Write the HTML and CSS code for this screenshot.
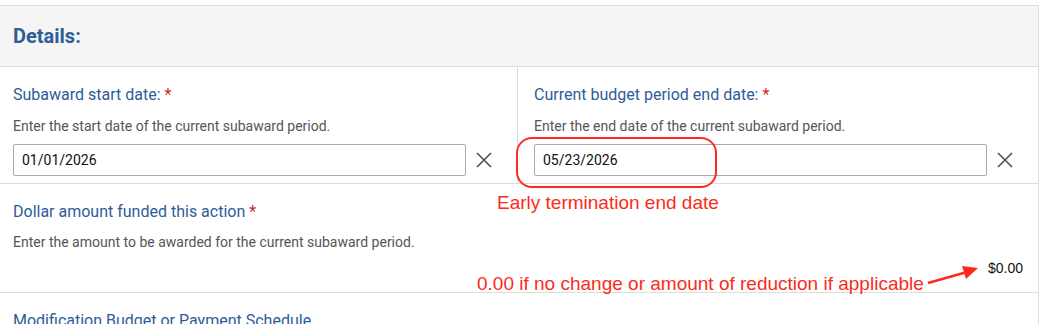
FILE: index.html
```html
<!DOCTYPE html>
<html lang="en">
<head>
    <meta charset="UTF-8">
    <meta name="viewport" content="width=device-width, initial-scale=1.0">
    <title>Details</title>
    <link rel="stylesheet" href="styles.css">
</head>
<body>
    <div class="panel">
        <div class="panel-head">
            <h2>Details:</h2>
        </div>

        <div class="row split">
            <div class="cell">
                <label class="field-label">Subaward start date: <span class="req">*</span></label>
                <p class="help">Enter the start date of the current subaward period.</p>
                <div class="date-field">
                    <input type="text" value="01/01/2026">
                    <button class="clear" aria-label="Clear">
                        <svg width="16" height="16" viewBox="0 0 16 16"><path d="M1 1L15 15M15 1L1 15" stroke="#555" stroke-width="1.7" fill="none"/></svg>
                    </button>
                </div>
            </div>
            <div class="cell">
                <label class="field-label">Current budget period end date: <span class="req">*</span></label>
                <p class="help">Enter the end date of the current subaward period.</p>
                <div class="date-field">
                    <input type="text" value="05/23/2026">
                    <button class="clear" aria-label="Clear">
                        <svg width="16" height="16" viewBox="0 0 16 16"><path d="M1 1L15 15M15 1L1 15" stroke="#555" stroke-width="1.7" fill="none"/></svg>
                    </button>
                </div>
            </div>
        </div>

        <div class="row amount">
            <label class="field-label">Dollar amount funded this action <span class="req">*</span></label>
            <p class="help">Enter the amount to be awarded for the current subaward period.</p>
            <div class="total">$0.00</div>
        </div>

        <div class="row last">
            <label class="field-label">Modification Budget or Payment Schedule</label>
        </div>
    </div>

    <!-- markup drawn over the form -->
    <div class="mark-box"></div>
    <div class="note note-end">Early termination end date</div>
    <div class="note note-amount">0.00 if no change or amount of reduction if applicable</div>
    <svg class="arrow" width="60" height="30" viewBox="0 0 60 30">
        <path d="M3 22L42 11" stroke="#fb2b20" stroke-width="2.5" fill="none"/>
        <path d="M53 7L37 5L41 18Z" fill="#fb2b20"/>
    </svg>
</body>
</html>
```

FILE: styles.css
```css
body {
    font-family: Roboto, "Liberation Sans", sans-serif;
    background-color: #fff;
    color: #222;
    margin: 0;
    padding: 0;
    position: relative;
    overflow: hidden;
}

.panel {
    margin: 5px 0 0 -4px;
    width: 1041px;
    border: 1px solid #ddd;
    border-bottom: none;
}

.panel-head {
    background-color: #f5f5f5;
    border-bottom: 1px solid #ddd;
    height: 60px;
    display: flex;
    align-items: center;
    padding-left: 16px;
}

.panel-head h2 {
    margin: 0;
    font-size: 20px;
    font-weight: 700;
    color: #2e5c99;
}

.row {
    border-bottom: 1px solid #ddd;
}

.split {
    display: grid;
    grid-template-columns: 520px 1fr;
}

.cell {
    padding: 18px 25px 7px 16px;
}

.cell + .cell {
    border-left: 1px solid #ddd;
}

.field-label {
    display: block;
    font-size: 16px;
    line-height: 20px;
    color: #2e5c99;
}

.req {
    color: #d3262c;
}

.help {
    margin: 13px 0 10px;
    font-size: 14px;
    line-height: 16px;
    color: #555;
}

.date-field {
    display: flex;
    align-items: center;
    gap: 10px;
}

.date-field input {
    flex: 1;
    height: 32px;
    box-sizing: border-box;
    border: 1px solid #aaa;
    border-radius: 2px;
    padding: 0 8px;
    font-family: Roboto, sans-serif;
    font-size: 14px;
    color: #111;
}

.clear {
    width: 16px;
    height: 16px;
    padding: 0;
    border: none;
    background: none;
    display: flex;
}

.amount {
    padding: 18px 15px 16px 16px;
}

.amount .help {
    margin: 12px 0 10px;
}

.total {
    text-align: right;
    font-family: "Liberation Sans", Arial, sans-serif;
    font-size: 14px;
    line-height: 16px;
    color: #111;
}

.last {
    padding: 18px 16px 10px;
    border-bottom: none;
}

.mark-box {
    position: absolute;
    left: 516px;
    top: 137px;
    width: 197px;
    height: 47px;
    border: 2px solid #fb2b20;
    border-radius: 16px;
}

.note {
    position: absolute;
    font-family: "Liberation Sans", Arial, sans-serif;
    font-size: 19px;
    line-height: 22px;
    color: #fb2b20;
    white-space: nowrap;
}

.note-end {
    left: 497px;
    top: 192px;
}

.note-amount {
    left: 477px;
    top: 273px;
}

.arrow {
    position: absolute;
    left: 925px;
    top: 261px;
}
```
